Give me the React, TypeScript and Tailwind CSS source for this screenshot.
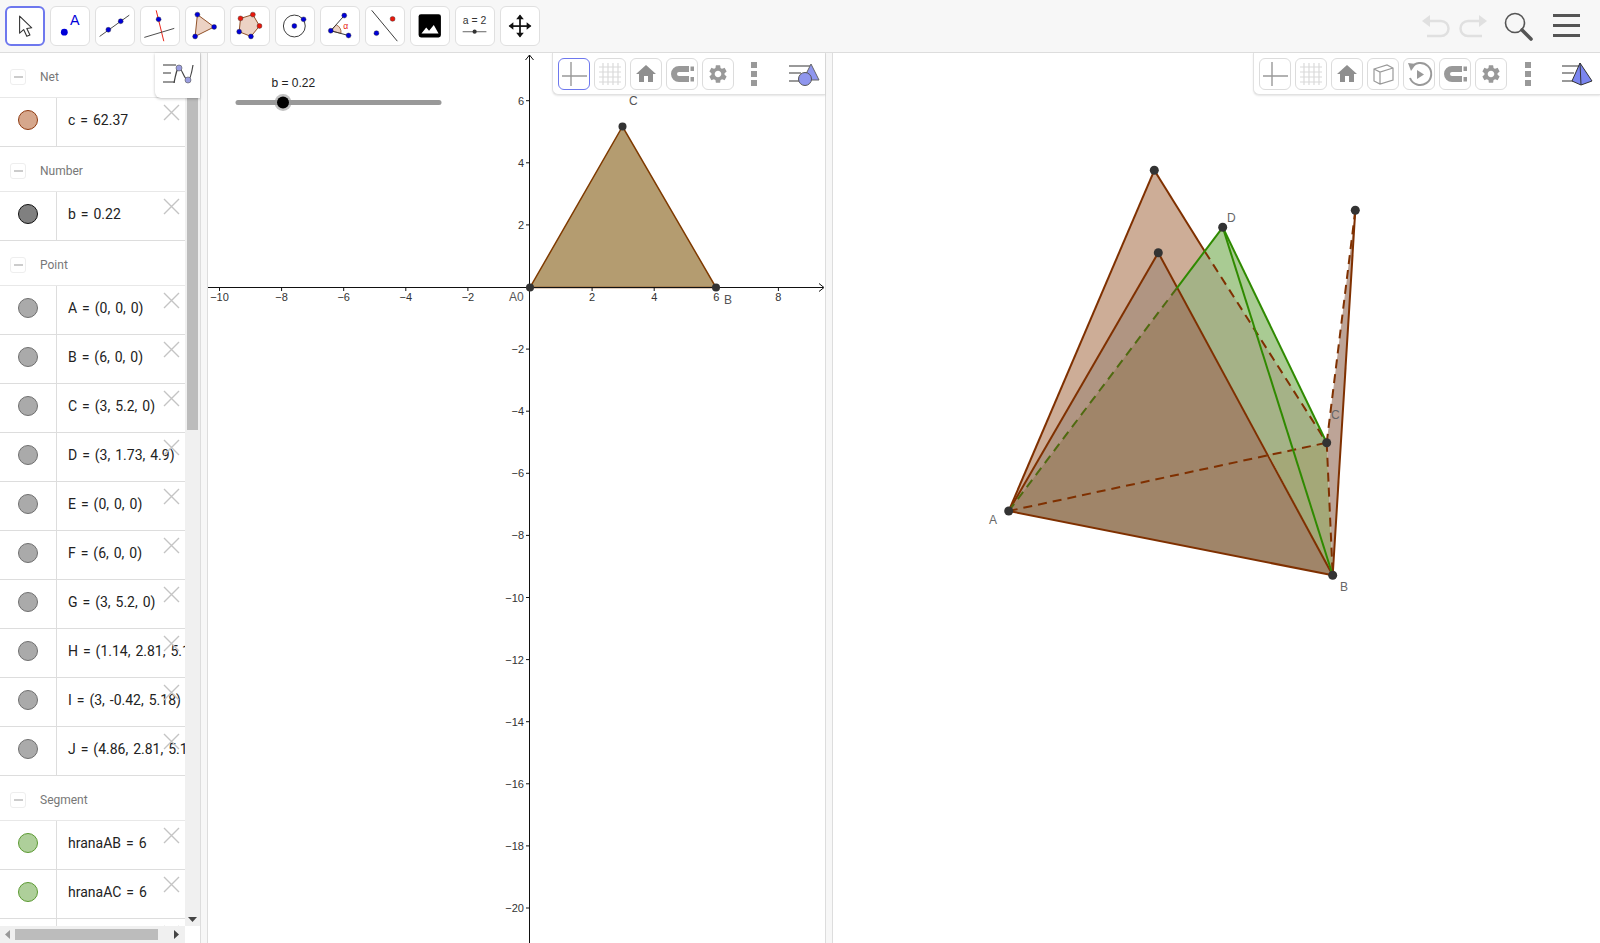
import type { ReactNode } from "react";
import { MdHome, MdSettings } from "react-icons/md";

const BLUE = "#0000d8";
const RED = "#e8180c";

function Dot({ x, y, c = BLUE, r = 2.6 }: { x: number; y: number; c?: string; r?: number }) {
  return <circle cx={x} cy={y} r={r} fill={c} stroke="#222" strokeWidth="0.4" />;
}

const tools: ReactNode[] = [
  <path key="m" d="M14 9 L14 28 L18.5 24 L22 31.5 L25.5 30 L22 22.8 L27.5 22 Z" fill="#fff" stroke="#333" strokeWidth="1.2" strokeLinejoin="round" />,
  <g key="p">
    <circle cx="14" cy="26.5" r="3.6" fill={BLUE} />
    <text x="25" y="19" textAnchor="middle" fontSize="15" fill={BLUE} fontFamily="Liberation Sans, sans-serif">A</text>
  </g>,
  <g key="l">
    <line x1="3.8" y1="31" x2="35" y2="8.6" stroke="#444" strokeWidth="1" />
    <Dot x={13} y={24} />
    <Dot x={26} y={15} />
  </g>,
  <g key="pp">
    <line x1="16" y1="3.5" x2="24" y2="36" stroke={RED} strokeWidth="1" />
    <line x1="3.5" y1="32" x2="35" y2="22.5" stroke="#444" strokeWidth="1" />
    <Dot x={18.5} y={13} />
  </g>,
  <g key="t">
    <path d="M12 8 L29.6 21 L9.6 31 Z" fill="#ecd2c4" stroke="#8b4a20" strokeWidth="1" />
    <Dot x={12} y={8} />
    <Dot x={29.6} y={21} />
    <Dot x={9.6} y={31} />
  </g>,
  <g key="pg">
    <path d="M10 12 L23 8 L30 20 L21 31 L8.6 26 Z" fill="#ecd2c4" stroke="#8b4a20" strokeWidth="1" />
    <Dot x={10} y={12} c={RED} />
    <Dot x={23} y={8} c={RED} />
    <Dot x={30} y={20} c={RED} />
    <Dot x={21} y={31} />
    <Dot x={8.6} y={26} />
  </g>,
  <g key="c">
    <circle cx="19.3" cy="20" r="11.5" fill="none" stroke="#333" strokeWidth="1" />
    <Dot x={19.3} y={20} />
    <Dot x={29} y={13} />
  </g>,
  <g key="a">
    <path d="M10.3 25 L16 18.7 A9 9 0 0 1 21 27.8 Z" fill="#ecd2c4" stroke="#8b4a20" strokeWidth="0.8" />
    <line x1="10.3" y1="25" x2="24.5" y2="9" stroke="#333" strokeWidth="1" />
    <line x1="10.3" y1="25" x2="29" y2="30" stroke="#333" strokeWidth="1" />
    <text x="26" y="23" textAnchor="middle" fontSize="9" fill={RED} fontFamily="Liberation Sans, sans-serif">α</text>
    <Dot x={10.3} y={25} />
    <Dot x={24.5} y={9} />
    <Dot x={29} y={30} />
  </g>,
  <g key="r">
    <line x1="6" y1="3.5" x2="33" y2="36" stroke="#333" strokeWidth="1" />
    <Dot x={11} y={27.5} />
    <Dot x={28} y={12.5} c={RED} />
  </g>,
  <g key="i">
    <rect x="8" y="7.5" width="23.5" height="24.5" rx="2.5" fill="#000" />
    <path d="M11 28 L16 21.5 L19 25 L24 19 L29 28 Z" fill="#fff" />
  </g>,
  <g key="s">
    <text x="19.6" y="18" textAnchor="middle" fontSize="11" fill="#333" fontFamily="Liberation Sans, sans-serif">a = 2</text>
    <line x1="7" y1="26" x2="32" y2="26" stroke="#777" strokeWidth="1.2" />
    <circle cx="19.6" cy="26" r="2.2" fill="#333" />
  </g>,
  <g key="mv" fill="#111">
    <rect x="9" y="19.2" width="22" height="1.8" />
    <rect x="19.1" y="9" width="1.8" height="22" />
    <path d="M20 8 L24 13 H16 Z M20 32 L24 27 H16 Z M8 20 L13 16 V24 Z M32 20 L27 16 V24 Z" />
  </g>,
];

function ToolButton({ active, children }: { active?: boolean; children: ReactNode }) {
  return (
    <div className={`w-[40px] h-[40px] rounded-md bg-white ${active ? "border-2 border-[#6e78ee]" : "border border-[#e0e0e0]"}`}>
      <svg width="100%" height="100%" viewBox="0 0 40 40">{children}</svg>
    </div>
  );
}

function Marble({ fill, border }: { fill: string; border: string }) {
  return <span className="w-[20px] h-[20px] rounded-full border" style={{ background: fill, borderColor: border }} />;
}

const GRAY = { fill: "#aaaaaa", border: "#6f6f6f" };
const GREEN = { fill: "#aecf9a", border: "#5b9a32" };

type Item = { text: string } & typeof GRAY;
const groups: { name: string; items: Item[] }[] = [
  { name: "Net", items: [{ text: "c = 62.37", fill: "#d6a78c", border: "#8f3a10" }] },
  { name: "Number", items: [{ text: "b = 0.22", fill: "#808080", border: "#111111" }] },
  {
    name: "Point",
    items: [
      "A = (0, 0, 0)",
      "B = (6, 0, 0)",
      "C = (3, 5.2, 0)",
      "D = (3, 1.73, 4.9)",
      "E = (0, 0, 0)",
      "F = (6, 0, 0)",
      "G = (3, 5.2, 0)",
      "H = (1.14, 2.81, 5.18)",
      "I = (3, -0.42, 5.18)",
      "J = (4.86, 2.81, 5.18)",
    ].map((text) => ({ text, ...GRAY })),
  },
  {
    name: "Segment",
    items: [
      { text: "hranaAB = 6", ...GREEN },
      { text: "hranaAC = 6", ...GREEN },
      { text: "", ...GREEN },
    ],
  },
];

function AlgebraRow({ item }: { item: Item }) {
  return (
    <div className="relative flex h-[49px] shrink-0 border-b border-[#dddddd] overflow-hidden">
      <div className="w-[57px] shrink-0 flex items-center justify-center border-r border-[#dddddd] pb-[4px]">
        <Marble fill={item.fill} border={item.border} />
      </div>
      <div className="pl-[11px] pb-[3px] flex items-center whitespace-nowrap text-[14px] text-[#222] [word-spacing:1.5px]">{item.text}</div>
      <svg className="absolute left-[163px] top-[6px]" width="17" height="17" viewBox="0 0 17 17">
        <path d="M1 1 L16 16 M16 1 L1 16" stroke="#c4c4c4" strokeWidth="1.4" />
      </svg>
    </div>
  );
}

function Algebra() {
  return (
    <div className="relative w-[200px] shrink-0 flex flex-col h-full">
      <div className="flex flex-1 min-h-0">
        <div className="w-[185px] shrink-0 flex flex-col overflow-hidden">
          {groups.map((g) => (
            <div key={g.name} className="flex flex-col shrink-0">
              <div className="h-[45px] flex items-center border-b border-[#e8e8e8] pt-[4px]">
                <span className="ml-[10px] w-[16px] h-[16px] rounded-[3px] border border-[#eeeeee] flex items-center justify-center">
                  <span className="w-[9px] h-[2px] bg-[#cccccc]" />
                </span>
                <span className="ml-[14px] text-[12px] text-[#777777]">{g.name}</span>
              </div>
              {g.items.map((it, i) => (
                <AlgebraRow key={i} item={it} />
              ))}
            </div>
          ))}
        </div>
        <div className="flex-1 bg-[#f0f0f0] flex flex-col items-center">
          <div className="mt-[44px] w-[11px] h-[333px] bg-[#bcbcbc]" />
          <svg className="mt-auto mb-[3px]" width="9" height="6" viewBox="0 0 9 6">
            <path d="M0 0 H9 L4.5 5 Z" fill="#444" />
          </svg>
        </div>
      </div>
      <div className="h-[17px] shrink-0 flex">
        <div className="w-[185px] bg-[#f0f0f0] flex items-center">
          <svg className="ml-[5px]" width="5" height="9" viewBox="0 0 5 9">
            <path d="M5 0 V9 L0 4.5 Z" fill="#999" />
          </svg>
          <div className="ml-[5px] w-[143px] h-[11px] bg-[#bcbcbc]" />
          <svg className="ml-[16px]" width="5" height="9" viewBox="0 0 5 9">
            <path d="M0 0 V9 L5 4.5 Z" fill="#444" />
          </svg>
        </div>
        <div className="flex-1 bg-white" />
      </div>
      <div className="absolute top-0 right-0 w-[45px] h-[45px] bg-white rounded-bl-md shadow-[0_1px_3px_rgba(0,0,0,0.25)]">
        <svg width="45" height="45" viewBox="0 0 45 45">
          <path d="M8 12 H21 M8 20 H16 M8 29 H20" stroke="#999" strokeWidth="2.2" />
          <path d="M19 30 C21 20 22 15 24 15 C27 15 29 27 33 27 C35 27 37 18 38 12" fill="none" stroke="#444" strokeWidth="1.2" />
          <circle cx="24" cy="15" r="3" fill="#9a9de0" stroke="#555" strokeWidth="0.6" />
          <circle cx="33" cy="27" r="3" fill="#9a9de0" stroke="#555" strokeWidth="0.6" />
        </svg>
      </div>
    </div>
  );
}

function StyleButton({ active, children }: { active?: boolean; children: ReactNode }) {
  return (
    <div className={`w-[32px] h-[32px] rounded-md flex items-center justify-center bg-white border ${active ? "border-[#6e78ee]" : "border-[#dcdcdc]"}`}>
      {children}
    </div>
  );
}

const AxesIcon = () => (
  <svg width="30" height="30" viewBox="0 0 30 30">
    <path d="M12 3 V27 M3 17 H28" stroke="#999" strokeWidth="1.4" />
  </svg>
);
const GridIcon = () => (
  <svg width="30" height="30" viewBox="0 0 30 30">
    <path d="M8 4 V26 M13 4 V26 M18 4 V26 M23 4 V26 M4 8 H26 M4 13 H26 M4 18 H26 M4 23 H26" stroke="#dadada" strokeWidth="1.2" />
  </svg>
);
const HomeIcon = () => <MdHome size={24} color="#8f8f8f" />;
const MagnetIcon = () => (
  <svg width="30" height="30" viewBox="0 0 30 30">
    <path d="M22 10 H12 A5 5 0 0 0 12 20 H22" fill="none" stroke="#999" strokeWidth="6" />
    <path d="M23.5 7.5 H27 V12 H23.5 Z M23.5 18 H27 V22.5 H23.5 Z" fill="#999" />
  </svg>
);
const GearIcon = () => <MdSettings size={22} color="#999" />;
const CubeIcon = () => (
  <svg width="30" height="30" viewBox="0 0 30 30">
    <path d="M6 10 L19 6 L25 9 V21 L12 25 L6 22 Z M6 10 L12 13 L25 9 M12 13 V25" fill="none" stroke="#999" strokeWidth="1.2" />
  </svg>
);
const ReplayIcon = () => (
  <svg width="30" height="30" viewBox="0 0 30 30">
    <path d="M7 9 A11 11 0 1 1 6 19" fill="none" stroke="#999" strokeWidth="2" />
    <path d="M4 4 L12 5 L7 12 Z" fill="#999" />
    <path d="M13 11 L20 15.5 L13 20 Z" fill="#999" />
  </svg>
);

function Dots() {
  return (
    <div className="w-[6px] flex flex-col gap-[3px]">
      <span className="h-[6px] bg-[#999]" />
      <span className="h-[6px] bg-[#999]" />
      <span className="h-[6px] bg-[#999]" />
    </div>
  );
}

function StyleBar({ className, dotsGap, iconGap, children, view }: { className: string; dotsGap: string; iconGap: string; children: ReactNode; view: ReactNode }) {
  return (
    <div className={`absolute top-0 right-0 h-[42px] bg-white rounded-bl-md border-l border-b border-[#e2e2e2] shadow-[0_1px_2px_rgba(0,0,0,0.1)] flex items-center pl-[5px] ${className}`}>
      <div className="flex gap-[4px]">{children}</div>
      <div className={dotsGap}>
        <Dots />
      </div>
      <div className={iconGap}>{view}</div>
    </div>
  );
}

function GraphicsCanvas() {
  const ox = 530;
  const oy = 287;
  const u = 31.05;
  const xs = [-10, -8, -6, -4, -2, 2, 4, 6, 8];
  const ys = [6, 4, 2, -2, -4, -6, -8, -10, -12, -14, -16, -18, -20];
  const fmt = (n: number) => (n < 0 ? `\u2212${-n}` : `${n}`);
  return (
    <svg className="absolute inset-0" width="100%" height="100%" viewBox="208 53 617 890" fontFamily="Liberation Sans, sans-serif">
      <path d="M530 287.5 L716 287.5 L622.5 126.5 Z" fill="#b49c70" stroke="#7f3a00" strokeWidth="1.5" />
      <line x1="208" y1={oy + 0.5} x2="823" y2={oy + 0.5} stroke="#111" strokeWidth="1" />
      <path d="M819 283.5 L824 287.5 L819 291.5" fill="none" stroke="#111" strokeWidth="1" />
      <line x1={ox - 0.5} y1="55" x2={ox - 0.5} y2="943" stroke="#111" strokeWidth="1" />
      <path d="M525.5 60 L529.5 55 L533.5 60" fill="none" stroke="#111" strokeWidth="1" />
      {xs.map((v) => (
        <g key={v}>
          <line x1={ox + v * u} y1={oy} x2={ox + v * u} y2={oy + 4} stroke="#111" strokeWidth="1" />
          <text x={ox + v * u} y={oy + 14} textAnchor="middle" fontSize="11" fill="#333">{fmt(v)}</text>
        </g>
      ))}
      {ys.map((v) => (
        <g key={v}>
          <line x1={ox - 4} y1={oy - v * u} x2={ox} y2={oy - v * u} stroke="#111" strokeWidth="1" />
          <text x={ox - 6} y={oy - v * u + 4} textAnchor="end" fontSize="11" fill="#333">{fmt(v)}</text>
        </g>
      ))}
      <text x="509" y="301" fontSize="12" fill="#555">A0</text>
      <text x="724" y="304" fontSize="12" fill="#555">B</text>
      <text x="629" y="105" fontSize="12" fill="#555">C</text>
      {[[530, 287.5], [716, 287.5], [622.5, 126.5]].map(([x, y]) => (
        <circle key={x} cx={x} cy={y} r="4" fill="#333" />
      ))}
      <line x1="238" y1="102.5" x2="439" y2="102.5" stroke="#999" strokeWidth="5" strokeLinecap="round" />
      <circle cx="283" cy="102.5" r="8.5" fill="#999" fillOpacity="0.6" />
      <circle cx="283" cy="102.5" r="6" fill="#000" />
      <text x="271.5" y="87" fontSize="12" fill="#222">b = 0.22</text>
    </svg>
  );
}

function Scene3D() {
  const A = "1008.7,511";
  const P = "1154.3,170.3";
  const Q = "1158.3,252.7";
  const D = "1222.7,227.3";
  const R = "1355.3,210.3";
  const C = "1326.7,442.7";
  const B = "1332.7,575.3";
  const X = "1176.7,288.3";
  const E = "1205,251.7";
  const Y = "1268.3,454";
  const seg = (a: string, b: string) => {
    const [x1, y1] = a.split(",");
    const [x2, y2] = b.split(",");
    return { x1, y1, x2, y2 };
  };
  const brown = "#7f3000";
  const green = "#2f8a00";
  return (
    <svg className="absolute inset-0" width="100%" height="100%" viewBox="833 53 767 890" fontFamily="Liberation Sans, sans-serif">
      <polygon points={`${A} ${P} ${C}`} fill="#cdad97" />
      <polygon points={`${R} ${B} ${C}`} fill="#bda497" />
      <polygon points={`${A} ${Q} ${B}`} fill="#b09582" />
      <polygon points={`${X} ${D} ${C} ${Y}`} fill="#a5b287" />
      <polygon points={`${E} ${D} ${C}`} fill="#a9cb93" />
      <polygon points={`${Y} ${C} ${B}`} fill="#a4a878" />
      <polygon points={`${A} ${X} ${B}`} fill="#a08569" />
      <g stroke={brown} strokeWidth="2" fill="none">
        <line {...seg(A, P)} />
        <line {...seg(P, E)} />
        <line {...seg(A, Q)} />
        <line {...seg(Q, B)} />
        <line {...seg(A, B)} />
        <line {...seg(R, B)} />
        <g strokeDasharray="9 6">
          <line {...seg(A, C)} />
          <line {...seg(E, C)} />
          <line {...seg(C, B)} />
          <line {...seg(C, R)} />
        </g>
      </g>
      <line {...seg(A, X)} stroke="#4f6a10" strokeWidth="2" strokeDasharray="9 6" />
      <g stroke={green} strokeWidth="2">
        <line {...seg(X, D)} />
        <line {...seg(D, C)} />
        <line {...seg(D, B)} />
      </g>
      {[P, Q, D, R, C, A, B].map((p) => {
        const [cx, cy] = p.split(",");
        return <circle key={p} cx={cx} cy={cy} r="4.5" fill="#333" />;
      })}
      <g fontSize="12" fill="#666">
        <text x="989" y="524">A</text>
        <text x="1227" y="222">D</text>
        <text x="1331" y="419">C</text>
        <text x="1340" y="591">B</text>
      </g>
    </svg>
  );
}

export default function App() {
  return (
    <div className="w-[1600px] h-[943px] flex flex-col overflow-hidden bg-white font-['Roboto',sans-serif]">
      <div className="h-[53px] shrink-0 bg-[#f7f7f7] border-b border-[#dddddd] flex items-center pl-[5px] pb-[1px]">
        <div className="flex gap-[5px]">
          {tools.map((t, i) => (
            <ToolButton key={i} active={i === 0}>{t}</ToolButton>
          ))}
        </div>
        <div className="ml-auto flex items-center pr-[20px]">
          <svg width="30" height="26" viewBox="0 0 30 26">
            <path d="M3 8 H20 A7.5 7.5 0 0 1 20 23 H6" fill="none" stroke="#e0e0e0" strokeWidth="2.5" />
            <path d="M1 8 L9 2 V14 Z" fill="#e0e0e0" />
          </svg>
          <svg className="ml-[7px]" width="30" height="26" viewBox="0 0 30 26">
            <path d="M27 8 H10 A7.5 7.5 0 0 0 10 23 H24" fill="none" stroke="#e0e0e0" strokeWidth="2.5" />
            <path d="M29 8 L21 2 V14 Z" fill="#e0e0e0" />
          </svg>
          <svg className="ml-[15px]" width="30" height="30" viewBox="0 0 30 30">
            <circle cx="12" cy="12" r="9.5" fill="none" stroke="#555" strokeWidth="1.6" />
            <line x1="19" y1="19" x2="28" y2="28" stroke="#555" strokeWidth="3.6" strokeLinecap="round" />
          </svg>
          <div className="ml-[20px] w-[27px] flex flex-col gap-[7px]">
            <span className="h-[3px] bg-[#555]" />
            <span className="h-[3px] bg-[#555]" />
            <span className="h-[3px] bg-[#555]" />
          </div>
        </div>
      </div>
      <div className="flex flex-1 min-h-0">
        <Algebra />
        <div className="w-[8px] shrink-0 bg-[#f7f7f7] border-x border-[#dddddd]" />
        <div className="relative w-[617px] shrink-0">
          <GraphicsCanvas />
          <StyleBar
            className="w-[273px]"
            dotsGap="ml-[17px]"
            iconGap="ml-[31px]"
            view={
              <svg width="32" height="26" viewBox="0 0 32 26">
                <path d="M1 5 H22 M1 12 H13 M1 20 H14" stroke="#999" strokeWidth="2" />
                <path d="M23 3 L31 19 H15 Z" fill="#8f96ee" stroke="#666" strokeWidth="1" />
                <circle cx="17" cy="18" r="6.5" fill="#8f96ee" stroke="#555" strokeWidth="1" />
              </svg>
            }
          >
            <StyleButton active><AxesIcon /></StyleButton>
            <StyleButton><GridIcon /></StyleButton>
            <StyleButton><HomeIcon /></StyleButton>
            <StyleButton><MagnetIcon /></StyleButton>
            <StyleButton><GearIcon /></StyleButton>
          </StyleBar>
        </div>
        <div className="w-[8px] shrink-0 bg-[#f7f7f7] border-x border-[#dddddd]" />
        <div className="relative flex-1">
          <Scene3D />
          <StyleBar
            className="w-[347px]"
            dotsGap="ml-[18px]"
            iconGap="ml-[30px]"
            view={
              <svg width="32" height="26" viewBox="0 0 32 26">
                <path d="M1 5 H18 M1 12 H13 M1 20 H14" stroke="#999" strokeWidth="2" />
                <path d="M19 2 L31 20 L20 24 L11 20 Z" fill="#7b86f0" stroke="#333" strokeWidth="1" />
                <path d="M19 2 L20 24" stroke="#333" strokeWidth="1" />
              </svg>
            }
          >
            <StyleButton><AxesIcon /></StyleButton>
            <StyleButton><GridIcon /></StyleButton>
            <StyleButton><HomeIcon /></StyleButton>
            <StyleButton><CubeIcon /></StyleButton>
            <StyleButton><ReplayIcon /></StyleButton>
            <StyleButton><MagnetIcon /></StyleButton>
            <StyleButton><GearIcon /></StyleButton>
          </StyleBar>
        </div>
      </div>
    </div>
  );
}
